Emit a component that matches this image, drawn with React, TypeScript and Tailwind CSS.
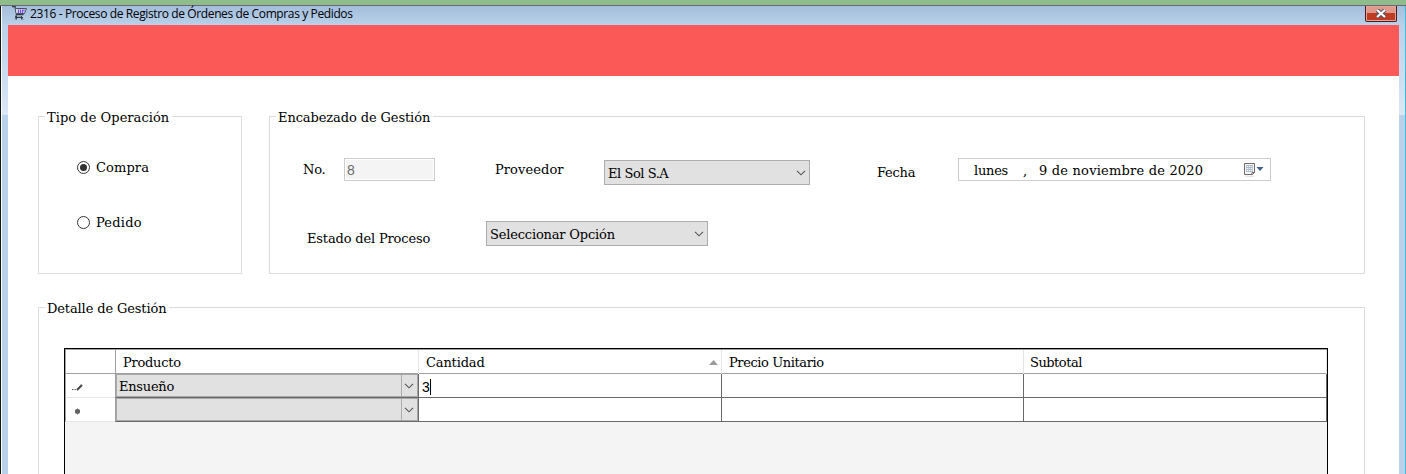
import type { ReactNode } from "react";

function Chevron() {
  return (
    <svg width="10" height="6" viewBox="0 0 10 6" className="shrink-0">
      <path d="M1 0.8 L5 4.8 L9 0.8" fill="none" stroke="#555" strokeWidth="1.1" />
    </svg>
  );
}

function CartIcon() {
  return (
    <svg width="16" height="14" viewBox="0 0 16 14" className="shrink-0">
      <path d="M1 0.5 H4 L5.5 8.5 H12.5" fill="none" stroke="#343c46" strokeWidth="1.3" />
      <path d="M4.5 2.5 H15.5 L13.5 7.5 H5.5" fill="#d8dcf6" stroke="#4a535e" strokeWidth="1" />
      <path d="M7.5 3.5 V7 M9.5 3.5 V7 M11.5 3.5 V7 M13 3.5 V5.5" stroke="#7a4df0" strokeWidth="1.2" />
      <path d="M5.5 8.5 L4.5 11 M4 11.5 H12 M5.5 10 V13.5 M10.5 10 V13.5 M4 13.5 L7 10.5 M9 10.5 L12 13.5" fill="none" stroke="#343c46" strokeWidth="1" />
    </svg>
  );
}

function TitleBar() {
  return (
    <header className="flex h-[19px] shrink-0 items-start justify-between bg-linear-to-b from-[#a3bddb] to-[#b9d1ea] pl-[9px] pr-[3px]">
      <div className="flex items-start gap-[3px]">
        <CartIcon />
        <h1 className="whitespace-nowrap font-['Open_Sans',sans-serif] text-[12px] leading-[16px] tracking-[-0.38px] text-black">
          2316 - Proceso de Registro de Órdenes de Compras y Pedidos
        </h1>
      </div>
      <button className="mr-[5px] flex h-4 w-8 items-center justify-center rounded-b-[2px] border border-t-0 border-[#4b1a20] bg-linear-to-b from-[#e0998b] from-45% to-[#bd3c22] to-50% shadow-[inset_0_0_0_1px_#e3a69a]">
        <svg width="12" height="9" viewBox="0 0 12 9" className="mb-px">
          <path d="M2 1 L10 8 M10 1 L2 8" stroke="#535666" strokeWidth="4.2" />
          <path d="M2 1 L10 8 M10 1 L2 8" stroke="#fff" strokeWidth="2.2" />
        </svg>
      </button>
    </header>
  );
}

function Group({ title, className, children }: { title: ReactNode; className: string; children: ReactNode }) {
  return (
    <section className={`relative border border-[#dcdcdc] ${className}`}>
      <h2 className="absolute -top-2 left-[6px] whitespace-nowrap bg-white pl-[2px] pr-[3px] leading-[18px]">{title}</h2>
      {children}
    </section>
  );
}

function Radio({ checked, children }: { checked?: boolean; children: ReactNode }) {
  return (
    <label className="flex h-[18px] items-center gap-[6px]">
      <span className="flex size-[13px] items-center justify-center rounded-full border border-[#333] bg-white">
        {checked && <span className="size-[7px] rounded-full bg-[#333]" />}
      </span>
      <span className="pt-[2px]">{children}</span>
    </label>
  );
}

function Combo({ className, children }: { className: string; children: ReactNode }) {
  return (
    <div className={`flex items-center justify-between border border-[#adadad] bg-[#e1e1e1] pl-[3px] pr-[3px] ${className}`}>
      <span className="pt-[2px]">{children}</span>
      <Chevron />
    </div>
  );
}

function CalendarIcon() {
  return (
    <svg width="20" height="14" viewBox="0 0 20 14">
      <path d="M1 13.2 H10" stroke="#dcdcdc" />
      <path d="M0.5 0.5 H10.5 V9.5 L8.5 11.5 H0.5 Z" fill="#f6f7f9" stroke="#766a68" />
      <path d="M2 2.5 H9 M2 4.5 H9 M2 6.5 H9 M2 8.5 H9" stroke="#aebbcb" />
      <path d="M2.5 2 V9 M4.5 2 V9 M6.5 2 V9 M8.5 2 V9" stroke="#aebbcb" strokeWidth="0.7" />
      <path d="M8 11.5 V9.5 H10.5" fill="none" stroke="#766a68" />
      <path d="M12.5 4 H19.5 L16 8 Z" fill="#425f8d" />
    </svg>
  );
}

function GridCombo({ children }: { children?: ReactNode }) {
  return (
    <div className="flex h-full border border-[#a8a8a8] bg-[#e1e1e1]">
      <span className="h-[21px] flex-1 pl-[2px] leading-[23px]">{children}</span>
      <span className="flex w-4 items-center justify-center border-l border-[#adadad] pr-px">
        <Chevron />
      </span>
    </div>
  );
}

const COLUMNS = "grid grid-cols-[50px_303px_303px_302px_304px]";

function DetailGrid() {
  return (
    <div className="ml-[25px] mt-[40px] h-[200px] w-[1264px] border border-black bg-[#f4f4f4]">
      <div className={`${COLUMNS} h-[25px] border-b border-t border-b-[#a0a0a0] border-t-[#a0a0a0] bg-white leading-[25px]`}>
        <div className="border-l border-[#a0a0a0]" />
        <div className="border-l border-[#a0a0a0] pl-[7px] tracking-[-0.25px]">Producto</div>
        <div className="flex items-center justify-between border-l border-[#e5e5e5] pl-[7px] pr-[3px]">
          <span className="tracking-[-0.15px]">Cantidad</span>
          <svg width="9" height="5" viewBox="0 0 9 5">
            <path d="M0 5 L4.5 0 L9 5 Z" fill="#9c9c9c" />
          </svg>
        </div>
        <div className="border-l border-[#e5e5e5] pl-[7px] tracking-[-0.4px]">Precio Unitario</div>
        <div className="border-x border-[#e5e5e5] pl-[6px] tracking-[-0.5px]">Subtotal</div>
      </div>
      <div className={`${COLUMNS} grid-rows-[24px] bg-white`}>
        <div className="flex items-center border-b border-l border-b-[#e5e5e5] border-l-[#a0a0a0] pl-[6px] pt-[2px]">
          <svg width="12" height="8" viewBox="0 0 12 8">
            <path d="M0 6.5 H1.3 M2.5 6.5 H3.8" stroke="#555" />
            <path d="M5 7 L10 2" stroke="#444" strokeWidth="2" />
            <path d="M9 1.5 L10.5 3" stroke="#777" />
          </svg>
        </div>
        <div className="border-b border-l border-b-[#696969] border-l-[#a0a0a0]">
          <GridCombo>
            <span className="tracking-[-0.25px]">Ensueño</span>
          </GridCombo>
        </div>
        <div className="flex items-center border-b border-l border-[#696969] pl-[3px] pt-[2px] font-['Liberation_Sans',sans-serif] text-[14px]">
          3<span className="h-4 w-px bg-black" />
        </div>
        <div className="border-b border-l border-[#696969]" />
        <div className="border-x border-b border-[#696969]" />
      </div>
      <div className={`${COLUMNS} grid-rows-[24px] bg-white`}>
        <div className="flex items-center border-b border-l border-b-[#e5e5e5] border-l-[#a0a0a0] pl-[8px] pt-[3px]">
          <svg width="7" height="7" viewBox="0 0 7 7">
            <circle cx="3.5" cy="3.5" r="2.4" fill="#505050" />
            <path d="M3.5 0.5 V6.5 M1 2 L6 5 M1 5 L6 2" stroke="#666" />
          </svg>
        </div>
        <div className="border-b border-l border-b-[#696969] border-l-[#a0a0a0]">
          <GridCombo />
        </div>
        <div className="border-b border-l border-[#696969]" />
        <div className="border-b border-l border-[#696969]" />
        <div className="border-x border-b border-[#696969]" />
      </div>
    </div>
  );
}

export default function App() {
  return (
    <div className="flex h-[474px] w-[1406px] flex-col overflow-hidden bg-white font-['DejaVu_Serif',serif] text-[13px] leading-[18px] text-black">
      <div className="h-[6px] shrink-0 border-b border-[#6c6778] bg-[#8fbc8b]" />
      <div className="flex min-h-0 flex-1 border-l border-r border-l-[#15151c] border-r-[#40b9dc]">
        <div className="flex w-full flex-col border-l border-white bg-[#b9d1ea]">
          <TitleBar />
          <div className="flex min-h-0 flex-1">
            <div className="w-[6px] shrink-0">
              <div className="h-[90px] bg-linear-to-b from-[#b9d1ea] to-[#dbe7f5]" />
            </div>
            <main className="w-[1391px] shrink-0 bg-white">
              <div className="h-[51px] bg-[#fb5858]" />
              <div className="mt-10 flex gap-[27px] pl-[30px]">
                <Group title={<span className="tracking-[0.04px]">Tipo de Operación</span>} className="h-[158px] w-[204px]">
                  <div className="flex flex-col gap-[37px] pl-[38px] pt-[41px]">
                    <Radio checked>
                      <span className="tracking-[0.1px]">Compra</span>
                    </Radio>
                    <Radio>
                      <span className="tracking-[0.2px]">Pedido</span>
                    </Radio>
                  </div>
                </Group>
                <Group title={<span className="tracking-[-0.1px]">Encabezado de Gestión</span>} className="h-[158px] w-[1096px]">
                  <div className="flex h-[68px] items-start pl-[33px] pt-[41px]">
                    <span className="mt-[3px] w-[41px] tracking-[-0.25px]">No.</span>
                    <div className="h-[23px] w-[91px] border border-[#cccccc] bg-[#f4f4f4] pl-[2px] font-['Liberation_Sans',sans-serif] text-[14px] leading-[23px] text-[#6d6d6d] shadow-[inset_0_0_0_1px_#fff]">
                      8
                    </div>
                    <span className="ml-[60px] mt-[3px] w-[109px] tracking-[0.08px]">Proveedor</span>
                    <Combo className="mt-[2px] h-[25px] w-[206px]">
                      <span className="tracking-[-0.45px]">El Sol S.A</span>
                    </Combo>
                    <span className="ml-[67px] mt-[6px] w-[81px] tracking-[-0.25px]">Fecha</span>
                    <div className="flex h-[23px] w-[313px] items-center border border-[#cccccc] pl-[15px] pr-[6px]">
                      <span className="w-[49px] pt-[2px] tracking-[-0.25px]">lunes</span>
                      <span className="w-[16px] pt-[2px]">,</span>
                      <span className="whitespace-nowrap pt-[2px] tracking-[0.2px]">9 de noviembre de 2020</span>
                      <span className="ml-auto">
                        <CalendarIcon />
                      </span>
                    </div>
                  </div>
                  <div className="flex items-start pl-[37px] pt-[36px]">
                    <span className="mt-[9px] w-[179px] tracking-[-0.16px]">Estado del Proceso</span>
                    <Combo className="h-[25px] w-[222px]">
                      <span className="tracking-[-0.18px]">Seleccionar Opción</span>
                    </Combo>
                  </div>
                </Group>
              </div>
              <div className="mt-[33px] pl-[30px]">
                <Group title={<span className="tracking-[-0.13px]">Detalle de Gestión</span>} className="h-[260px] w-[1327px]">
                  <DetailGrid />
                </Group>
              </div>
            </main>
            <div className="w-[6px] shrink-0">
              <div className="h-[90px] bg-linear-to-b from-[#b9d1ea] to-[#dbe7f5]" />
            </div>
          </div>
        </div>
      </div>
    </div>
  );
}
